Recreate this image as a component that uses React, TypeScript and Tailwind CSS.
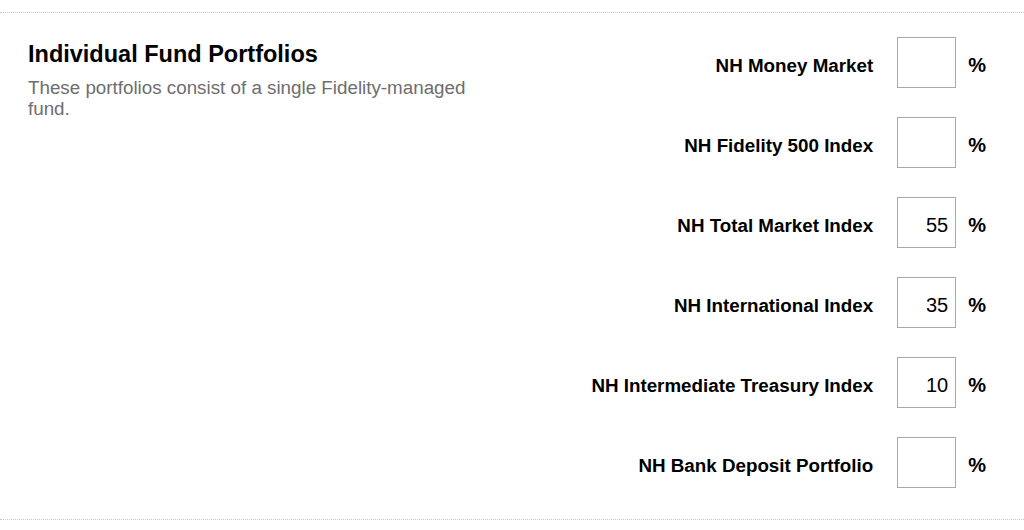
import { useState } from "react";

const funds = [
  { id: "money-market", name: "NH Money Market", value: "" },
  { id: "fidelity-500", name: "NH Fidelity 500 Index", value: "" },
  { id: "total-market", name: "NH Total Market Index", value: "55" },
  { id: "international", name: "NH International Index", value: "35" },
  { id: "intermediate-treasury", name: "NH Intermediate Treasury Index", value: "10" },
  { id: "bank-deposit", name: "NH Bank Deposit Portfolio", value: "" },
];

export default function App() {
  const [values, setValues] = useState<Record<string, string>>(
    Object.fromEntries(funds.map((f) => [f.id, f.value]))
  );

  return (
    <div className="min-h-screen bg-white font-['Liberation_Sans',Arial,sans-serif] text-black pt-3">
      <section className="flex justify-between border-y border-dotted border-[#c8c8c8] pl-7 pr-[38px] pt-6 pb-[31px]">
        {/* Description */}
        <div className="max-w-[455px] pt-[3px]">
          <h2 className="text-[23.5px] leading-[28px] font-bold">Individual Fund Portfolios</h2>
          <p className="mt-[9px] text-[18.8px] leading-[21px] text-[#6e6e6e]">
            These portfolios consist of a single Fidelity-managed fund.
          </p>
        </div>

        {/* Allocation inputs */}
        <div className="flex flex-col items-end gap-[29px]">
          {funds.map((fund) => (
            <label key={fund.id} className="flex items-baseline">
              <span className="text-[18.8px] font-bold mr-6">{fund.name}</span>
              <input
                type="text"
                value={values[fund.id]}
                onChange={(e) => setValues({ ...values, [fund.id]: e.target.value })}
                className="w-[59px] h-[51px] border border-[#a9a9a9] bg-white text-right text-[20px] pr-[7px] pt-[5px] outline-none"
              />
              <span className="ml-3 text-[20px] font-bold">%</span>
            </label>
          ))}
        </div>
      </section>
    </div>
  );
}
